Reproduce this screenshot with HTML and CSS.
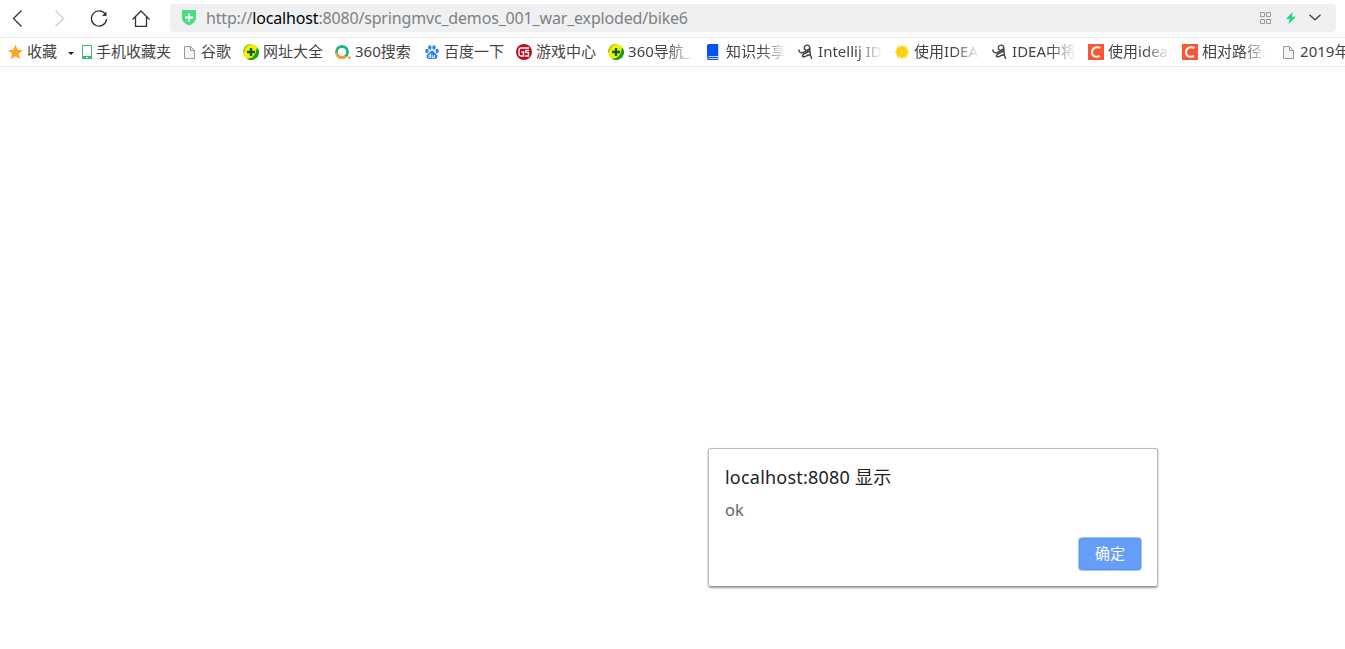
FILE: index.html
```
<!DOCTYPE html>
<html lang="zh-CN">
<head>
    <meta charset="UTF-8">
    <title>bike6</title>
    <link rel="stylesheet" href="styles.css">
</head>
<body>
    <!-- 共用图标 -->
    <svg class="sprite">
        <symbol id="page" viewBox="0 0 16 16">
            <path d="M3.500 2.500h6l4 4v8h-10z M9.500 2.500v4h4" fill="#f5f5f5" stroke="#999"/>
        </symbol>
        <symbol id="nav360" viewBox="0 0 16 16">
            <circle cx="8" cy="8" r="8" fill="#f6ec10"/>
            <path d="M16 7A8 8 0 0 1 3.500 14.600C9 15 13 12 13.800 3.500Q15.700 5.500 16 7z" fill="#1d9a26"/>
            <path d="M0 8.500A8 8 0 0 1 10 .3C5 1 2 3.500 1.300 8.500z" fill="#9fc926"/>
            <path d="M8 4v8M4 8h8" stroke="#0b6412" stroke-width="2.400"/>
        </symbol>
        <symbol id="person" viewBox="0 0 16 16">
            <path d="M.6 5.500C1.500 8.500 2.500 9.500 5 8.500c2.500-1 4-1.500 6-3.500" fill="none" stroke="#444" stroke-width="1.400"/>
            <ellipse cx="9" cy="3.800" rx="2.700" ry="2.600" fill="none" stroke="#444" stroke-width="1.300"/>
            <path d="M11.700 3.500c.3 4-.2 7 2 11.500M11.500 7C9 8.500 5.500 9 4.500 11.500c-.5 1.800 2 1.500 3.500.7 2-1.200 3-1.700 4.500-.7" fill="none" stroke="#444" stroke-width="1.500"/>
        </symbol>
        <symbol id="csdn" viewBox="0 0 16 16">
            <path d="M0 0h16v16H0z" fill="#fc5531"/>
            <path d="M12.500 4C8 2 4 4 4 8.500c0 4 4 5 8 3.500" fill="none" stroke="#fff" stroke-width="2"/>
        </symbol>
    </svg>

    <div class="toolbar">
        <svg class="nav-btn back" viewBox="0 0 18 18"><path d="M13.500 1.500L5.500 9.500l8 8" stroke="#333"/></svg>
        <svg class="nav-btn forward" viewBox="0 0 18 18"><path d="M5.500 1.500l8 8-8 8" stroke="#ccc"/></svg>
        <svg class="nav-btn reload" viewBox="0 0 18 18">
            <path d="M15.500 5.500A7.600 7.600 0 1 0 16.600 10" stroke="#333"/>
            <path d="M16.500 2.500V7H12z" fill="#333"/>
        </svg>
        <svg class="nav-btn home" viewBox="0 0 18 18"><path d="M.5 10.500L9 2l8.500 8.500M3.500 8v9.400h11V8" stroke="#333"/></svg>
        <div class="address">
            <svg class="shield" viewBox="0 0 14 16">
                <path d="M0 1Q0 0 1 0h12q1 0 1 1v7q0 5-7 7.500Q0 13 0 8z" fill="#4bdd82"/>
                <path d="M7 3.500v8M3 7.500h8" stroke="#fff" stroke-width="2"/>
            </svg>
            <span class="url">http://<b>localhost</b>:8080/springmvc_demos_001_war_exploded/bike6</span>
            <svg class="qr" viewBox="0 0 12 12"><path d="M.5.5h4v4h-4zM6.500.5h4v4h-4zM.5 7.500h4v4h-4zM6.500 7.500h4v4h-4z" fill="none" stroke="#999"/></svg>
            <svg class="bolt" viewBox="0 0 10 12"><path d="M6.500 0L0 7h3.700L2.500 12 10 4.800H6z" fill="#1fd97c"/></svg>
            <svg class="chevron" viewBox="0 0 12 7"><path d="M.5.7L6 5.700 11.500.7" fill="none" stroke="#444" stroke-width="1.400"/></svg>
        </div>
    </div>

    <div class="bookmarks">
        <div class="bookmark fav">
            <svg viewBox="0 0 16 16"><path d="M8.500 .8l2.100 5 5.300.4-4.100 3.500 1.300 5.300-4.600-2.800L3.900 15l1.300-5.300L1.100 6.200l5.300-.4z" fill="#ffa31a"/></svg>
            <span>收藏</span>
            <i class="caret"></i>
        </div>
        <div class="bookmark phone">
            <svg viewBox="0 0 11 16"><rect x="1.500" y="1.500" width="9" height="13" fill="#fff" stroke="#3dbb6c"/><path d="M1 12h10v3H1z" fill="#3dbb6c"/><path d="M5 13.500h2" stroke="#fff"/></svg>
            <span>手机收藏夹</span>
        </div>
        <div class="bookmark"><svg><use href="#page"/></svg><span>谷歌</span></div>
        <div class="bookmark"><svg><use href="#nav360"/></svg><span>网址大全</span></div>
        <div class="bookmark">
            <svg viewBox="0 0 16 16">
                <circle cx="7" cy="8" r="5.500" fill="none" stroke="#19b973" stroke-width="2.800"/>
                <path d="M1.500 8.500a5.500 5.500 0 0 0 9.300 3.500" fill="none" stroke="#ff9b38" stroke-width="2.800"/>
                <circle cx="14.300" cy="13.700" r="1.400" fill="#ff9b38"/>
            </svg>
            <span class="w57">360搜索</span>
        </div>
        <div class="bookmark">
            <svg viewBox="0 0 16 16">
                <g fill="#2f80f5">
                    <ellipse cx="2.900" cy="7" rx="1.700" ry="2.200"/><ellipse cx="5.800" cy="3.500" rx="1.700" ry="2.300"/>
                    <ellipse cx="10" cy="3.500" rx="1.700" ry="2.300"/><ellipse cx="13.200" cy="7" rx="1.600" ry="2.200"/>
                    <path d="M8 6.800c2 0 2.500 2 4.200 3.300 2.300 1.900 1.200 5-1.200 5-1.300 0-1.800-.4-3-.4s-1.700.4-3 .4c-2.400 0-3.500-3.100-1.200-5C5.500 8.800 6 6.800 8 6.800z"/>
                </g>
                <path d="M6.500 9.500v4H5.200q-1-1.200 0-2.300h1.300M8.300 11v2.500h2.200V11" fill="none" stroke="#fff" stroke-width=".9"/>
            </svg>
            <span>百度一下</span>
        </div>
        <div class="bookmark">
            <svg viewBox="0 0 16 16">
                <circle cx="8" cy="8" r="8" fill="#b9101d"/>
                <path d="M13 4H5.500Q3 4 3 6.500v3Q3 12 5.500 12H7.500V8H5.500M13 6.300H9.800V8.500H12.500V12H9" fill="none" stroke="#fff" stroke-width="1.300"/>
            </svg>
            <span>游戏中心</span>
        </div>
        <div class="bookmark"><svg><use href="#nav360"/></svg><span class="fade w66">360导航_</span></div>
        <div class="bookmark">
            <svg viewBox="0 0 16 16">
                <rect x="1" y="0" width="12" height="16" rx="2" fill="#0750f5"/>
                <path d="M12.500 1v13.500H3q-1.500-1 0-2h9" fill="none" stroke="#c9d9fc" stroke-width="1"/>
            </svg>
            <span class="fade w60">知识共享</span>
        </div>
        <div class="bookmark"><svg><use href="#person"/></svg><span class="fade w64">Intellij ID</span></div>
        <div class="bookmark">
            <svg viewBox="0 0 16 16">
                <path d="M8 1l2 1.200 2.500.3 1 2.300L15 8l-1.500 3.200-1 2.300-2.500.3L8 15l-2-1.200-2.500-.3-1-2.300L1 8l1.500-3.200 1-2.300L6 2.200z" fill="#ffdf38"/>
                <circle cx="8" cy="8" r="5" fill="#ffcf00"/><path d="M8 6v4" stroke="#ffe060" stroke-width="2"/>
            </svg>
            <span class="fade w66">使用IDEA</span>
        </div>
        <div class="bookmark"><svg><use href="#person"/></svg><span class="fade w64">IDEA中将</span></div>
        <div class="bookmark"><svg><use href="#csdn"/></svg><span class="fade w62">使用idea</span></div>
        <div class="bookmark"><svg><use href="#csdn"/></svg><span class="fade w66">相对路径.</span></div>
        <div class="bookmark"><svg><use href="#page"/></svg><span>2019年</span></div>
    </div>

    <div class="page">
        <div class="dialog">
            <div class="dialog-title">localhost:8080 显示</div>
            <div class="dialog-text">ok</div>
            <button class="dialog-ok">确定</button>
        </div>
    </div>
</body>
</html>
```
FILE: styles.css
```
* {
    box-sizing: border-box;
}

body {
    margin: 0;
    height: 649px;
    overflow: hidden;
    background-color: #fff;
    font-family: 'Noto Sans', 'Noto Sans CJK SC', sans-serif;
    display: flex;
    flex-direction: column;
}

svg {
    display: block;
    flex: none;
}

.sprite {
    display: none;
}

.toolbar {
    display: flex;
    flex: none;
    align-items: center;
    height: 38px;
    padding: 0 9px 2px 8px;
    border-bottom: 1px solid #eaebed;
}

.nav-btn {
    width: 18px;
    height: 18px;
    margin-right: 24px;
    fill: none;
    stroke-width: 1.3;
}

.forward {
    margin-right: 22px;
}

.home {
    margin-right: 20px;
}

.address {
    display: flex;
    flex: 1;
    align-items: center;
    height: 28px;
    padding: 0 15px 0 12px;
    border-radius: 4px;
    background-color: #eff0f2;
}

.shield {
    width: 14px;
    height: 16px;
    margin-right: 10px;
}

.url {
    flex: 1;
    color: #808080;
    font-size: 16px;
    letter-spacing: -0.17px;
    line-height: 28px;
    white-space: nowrap;
}

.url b {
    color: #000;
    font-weight: normal;
}

.qr {
    width: 12px;
    height: 12px;
    margin-right: 14px;
}

.bolt {
    width: 10px;
    height: 12px;
    margin-right: 13px;
}

.chevron {
    width: 12px;
    height: 7px;
}

.bookmarks {
    display: flex;
    flex: none;
    align-items: center;
    gap: 12px;
    height: 29px;
    padding-left: 7px;
    border-bottom: 1px solid #eaebed;
    color: #444;
    font-size: 15px;
    line-height: 26px;
    overflow: hidden;
}

.bookmark {
    display: flex;
    flex: none;
    align-items: center;
    gap: 4px;
    height: 28px;
    white-space: nowrap;
}

.bookmark span {
    height: 28px;
}

.bookmark svg {
    width: 16px;
    height: 16px;
}

.bookmark.fav {
    width: 62px;
}

.bookmark.phone {
    width: 88px;
}

.bookmark.phone svg {
    width: 11px;
}

.caret {
    margin: 2px 0 0 7px;
    border: 3px solid transparent;
    border-top-color: #222;
    border-bottom: 0;
}

.fade {
    -webkit-mask-image: linear-gradient(to right, #000 60%, transparent);
    mask-image: linear-gradient(to right, #000 60%, transparent);
}

.w57 { width: 57px; }
.w60 { width: 60px; }
.w62 { width: 62px; }
.w64 { width: 64px; }
.w66 { width: 66px; }

.page {
    flex: 1;
    padding: 381px 0 0 708px;
}

.dialog {
    display: flex;
    flex-direction: column;
    width: 450px;
    height: 139px;
    padding: 14px 15px 15px 16px;
    border: 1px solid #bbb;
    border-bottom-color: #999;
    border-radius: 3px;
    box-shadow: 0 1px 2px rgba(0, 0, 0, 0.4);
}

.dialog-title {
    color: #222;
    font-size: 18px;
    letter-spacing: 0.22px;
    line-height: 28px;
}

.dialog-text {
    margin-top: 5px;
    color: #646464;
    font-size: 16.5px;
    line-height: 28px;
}

.dialog-ok {
    align-self: flex-end;
    width: 64px;
    height: 34px;
    margin-top: 13px;
    padding: 0 0 2px;
    border: 1px solid #a9c8fb;
    border-radius: 4px;
    background-color: #669df6;
    box-shadow: inset 0 0 0 1px #5792f5;
    color: #fff;
    font: 15px 'Noto Sans CJK SC', sans-serif;
    line-height: 30px;
}
```
